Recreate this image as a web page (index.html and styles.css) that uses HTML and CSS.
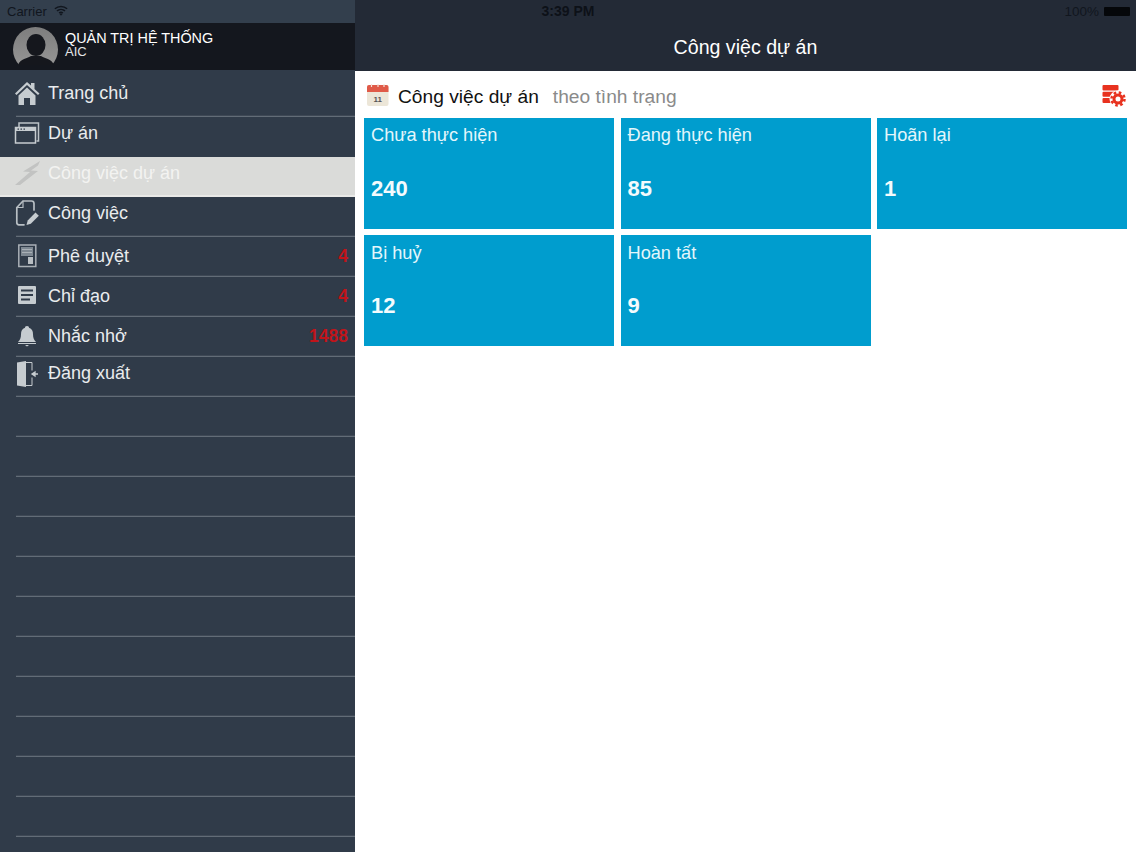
FILE: index.html
```html
<!DOCTYPE html>
<html lang="vi">
<head>
<meta charset="utf-8">
<title>Công việc dự án</title>
<link rel="stylesheet" href="styles.css">
</head>
<body>
<div class="app">
  <aside class="sidebar">
    <div class="status status-left"><span>Carrier</span>
      <svg class="wifi" width="14" height="11" viewBox="0 0 16 12"><path d="M1 4C5 .4 11 .4 15 4M3.400 6.500C6 4.300 10 4.300 12.600 6.500M5.800 8.800C7 7.800 9 7.800 10.200 8.800" fill="none" stroke="#11161e" stroke-width="1.700"/><path d="M8 12 6.300 10C7.300 9.400 8.700 9.400 9.700 10Z" fill="#11161e"/></svg>
    </div>
    <div class="user">
      <svg class="avatar" width="46" height="39" viewBox="0 0 46 39"><defs><clipPath id="av"><rect width="46" height="38"/></clipPath><linearGradient id="avg" x1="0" y1="0" x2="0" y2="1"><stop offset="0" stop-color="#7d7d7d"/><stop offset="1" stop-color="#9a9a9a"/></linearGradient></defs><g clip-path="url(#av)"><circle cx="22.500" cy="22.500" r="22.500" fill="url(#avg)"/><ellipse cx="23" cy="18" rx="9.500" ry="11" fill="#15171d"/><path d="M5 38c2-6 10-7 13-9h10c3 2 11 3 13 9v2H5Z" fill="#15171d"/></g></svg>
      <div class="user-text"><div class="user-name">QUẢN TRỊ HỆ THỐNG</div><div class="user-org">AIC</div></div>
    </div>
    <nav class="menu">
      <div class="row row-first"><svg class="ico" width="28" height="26" viewBox="0 0 28 26"><path d="M2 13.500 14 2l4 3.600V3h3.500v6L26.500 13.500 25 15 14 5 3.500 15Z" fill="#c6ccd0"/><path d="M5.500 15.500 14 7.500l8.500 8V25H17v-7h-6v7H5.500Z" fill="#c6ccd0"/></svg><span class="label">Trang chủ</span></div>
      <div class="row row-b2 row-noline"><svg class="ico" width="28" height="22" viewBox="0 0 28 22"><path d="M6 5V1h19.500v18H23.500" fill="none" stroke="#bcc3c8" stroke-width="1.500"/><rect x="2.500" y="5.500" width="20" height="15.500" fill="none" stroke="#c6ccd0" stroke-width="1.500"/><rect x="2.500" y="5.500" width="20" height="3.500" fill="#c6ccd0"/><path d="M4.500 7.200h1.500M7.500 7.200h1.500M10.500 7.200h1.500" stroke="#303b49" stroke-width="1.200"/></svg><span class="label">Dự án</span></div>
      <div class="row row-active"><svg class="ico" width="28" height="26" viewBox="0 0 28 26"><path d="M27 1 10 11.500l7 .5L2 25h5l18-14-7-.5 7-5Z" fill="#c2c3c2"/></svg><span class="label">Công việc dự án</span></div>
      <div class="row row-b2"><svg class="ico" width="28" height="28" viewBox="0 0 28 28"><path d="M10 2h8.500c1.500 0 2.500.8 2.500 2.500V11M10 2 3.800 8.500V23.500c0 1.500.8 2.300 2.200 2.300h5" fill="none" stroke="#b8bfc4" stroke-width="1.700" stroke-linecap="round"/><path d="M10 2v6.500H3.800" fill="none" stroke="#b8bfc4" stroke-width="1.200"/><path d="M13.500 26l1.200-4.500 7.800-8 3.300 3.300-8 7.900Z" fill="#c6ccd0"/></svg><span class="label">Công việc</span></div>
      <div class="row row-low"><svg class="ico" width="28" height="26" viewBox="0 0 28 26"><rect x="5.800" y="2" width="17" height="21.500" fill="#303b49" stroke="#a9b0b6" stroke-width="1.500"/><rect x="8" y="4" width="12" height="9" fill="#7d8791"/><path d="M9 6.500h10M9 9.500h10" stroke="#a9b0b6" stroke-width="1"/><rect x="15" y="14" width="5" height="7" fill="#b8bec3"/></svg><span class="label">Phê duyệt</span><span class="badge">4</span></div>
      <div class="row row-low"><svg class="ico" width="28" height="22" viewBox="0 0 28 22"><rect x="5" y="1" width="18" height="18" rx="1" fill="#c6ccd0"/><path d="M8 5.500h12M8 10h12M8 14.500h9" stroke="#303b49" stroke-width="2.200"/></svg><span class="label">Chỉ đạo</span><span class="badge">4</span></div>
      <div class="row row-low"><svg class="ico" width="28" height="22" viewBox="0 0 28 22"><path d="M14 1c1.500 0 2 .8 2 1.800 3 1 4 3.500 4 6.500 0 4 1 5.500 3 7.700H5c2-2.200 3-3.700 3-7.700 0-3 1-5.500 4-6.500C12 1.800 12.500 1 14 1Z" fill="#c6ccd0"/><path d="M5 18h18v1H5ZM12 20h4l-2 1.500Z" fill="#c6ccd0"/></svg><span class="label">Nhắc nhở</span><span class="badge">1488</span></div>
      <div class="row row-exit"><svg class="ico" width="28" height="28" viewBox="0 0 28 28"><path d="M4 2.500 13 1v26l-9-1.500Z" fill="#c6ccd0"/><path d="M13 2.500h6v8M13 25.500h6V17.500" fill="none" stroke="#c6ccd0" stroke-width="1"/><path d="M20 14h5M22 12 19 14l3 2Z" fill="#c6ccd0" stroke="#c6ccd0" stroke-width="1.300"/></svg><span class="label">Đăng xuất</span></div>
      <div class="row"></div><div class="row"></div><div class="row"></div><div class="row"></div>
      <div class="row"></div><div class="row"></div><div class="row"></div><div class="row"></div>
      <div class="row"></div><div class="row"></div><div class="row"></div>
    </nav>
  </aside>
  <main class="main">
    <header class="topbar">
      <div class="status status-right"><span class="time">3:39 PM</span><span class="battery-wrap"><span>100%</span><span class="battery"></span></span></div>
      <div class="title">Công việc dự án</div>
    </header>
    <section class="content">
      <div class="heading">
        <svg class="cal" width="22" height="23" viewBox="0 0 22 23"><rect x="0" y="1" width="21.500" height="21" rx="2" fill="#ece6d8"/><path d="M0 3a2 2 0 0 1 2-2h17.500a2 2 0 0 1 2 2v5H0Z" fill="#e05a48"/><path d="M4.500 0v3M11 0v3M17 0v3" stroke="#f2e2d8" stroke-width="1.200"/><text x="10.700" y="18" class="cal-num">11</text></svg>
        <span class="h-main">Công việc dự án</span><span class="h-sub">theo tình trạng</span>
        <svg class="gear" width="24" height="22" viewBox="0 0 24 22"><g fill="#e8321f"><rect x="0.500" y="0" width="16" height="5.500" rx="1"/><rect x="0.500" y="6.800" width="16" height="5" rx="1"/><rect x="0.500" y="13" width="16" height="5" rx="1"/></g><circle cx="16" cy="14" r="8.500" fill="#fff"/><circle cx="16" cy="14" r="4" fill="none" stroke="#e8321f" stroke-width="3"/><circle cx="16" cy="14" r="6.500" fill="none" stroke="#e8321f" stroke-width="2.500" stroke-dasharray="2.550 2.550"/></svg>
      </div>
      <div class="tiles">
        <div class="tile"><div class="tile-label">Chưa thực hiện</div><div class="tile-value">240</div></div>
        <div class="tile"><div class="tile-label">Đang thực hiện</div><div class="tile-value">85</div></div>
        <div class="tile"><div class="tile-label">Hoãn lại</div><div class="tile-value">1</div></div>
        <div class="tile tile-low"><div class="tile-label">Bị huỷ</div><div class="tile-value">12</div></div>
        <div class="tile tile-low"><div class="tile-label">Hoàn tất</div><div class="tile-value">9</div></div>
      </div>
    </section>
  </main>
</div>
</body>
</html>
```
FILE: styles.css
```css
* { box-sizing: border-box; }
html, body { margin: 0; height: 100%; }
body { font-family: "Liberation Sans", Arial, sans-serif; background: #fff; overflow: hidden; }
.app { display: flex; width: 1136px; height: 852px; overflow: hidden; }
.sidebar { width: 355px; flex: none; background: #303b49; color: #fff; display: flex; flex-direction: column; height: 852px; overflow: hidden; }
.status { font-size: 13px; color: #11161e; }
.status-left { height: 23px; padding: 4px 0 0 7px; display: flex; align-items: flex-start; gap: 7px; background: #333f4d; }
.wifi { margin-top: 1px; }
.user { height: 47px; background: #14171e; display: flex; align-items: flex-start; padding: 4px 0 0 13px; gap: 6px; flex: none; }
.avatar { flex: none; }
.user-text { padding-top: 5px; }
.user-name { font-size: 14.400px; line-height: 13px; color: #fff; }
.user-org { font-size: 13px; color: #e4e6e8; line-height: 12px; margin-top: 1px; }
.menu { display: flex; flex-direction: column; flex: none; }
.row { height: 40px; flex: none; position: relative; display: flex; align-items: center; padding: 0 7px 6px 13px; font-size: 18px; color: #e9ecee; }
.row::after { content: ""; position: absolute; left: 16px; right: 0; bottom: 0; height: 1px; background: #626c77; box-shadow: 0 -1px 0 #3e4855; }
.row-first { height: 47px; padding-bottom: 1px; }
.row-b2 { padding-bottom: 8px; }
.row-noline::after { display: none; }
.row-low { padding-bottom: 2px; }
.row-exit { padding-bottom: 7px; }
.row-active { background: #dadbd9; color: #f3f3f1; border-bottom: 2px solid #e9e9e7; padding-bottom: 6px; }
.row-active::after { display: none; }
.ico { flex: none; margin-right: 7px; }
.label { flex: 1; }
.badge { color: #c0141a; font-weight: 700; font-size: 17.500px; }
.main { flex: 1; display: flex; flex-direction: column; min-width: 0; }
.topbar { height: 71px; background: #232a36; flex: none; }
.status-right { height: 23px; padding: 3px 6px 0 0; position: relative; display: flex; justify-content: flex-end; }
.time { position: absolute; left: 0; width: 426px; text-align: center; top: 3px; font-size: 14px; font-weight: 700; color: #0d1118; }
.battery-wrap { display: flex; align-items: center; gap: 5px; height: 17px; font-size: 13.500px; }
.battery { width: 26px; height: 9px; background: #05070a; border-radius: 1px; }
.title { text-align: center; color: #fff; font-size: 19.600px; line-height: 48px; height: 48px; }
.content { flex: 1; padding: 0 9px; }
.heading { height: 47px; display: flex; align-items: center; padding-top: 5px; font-size: 19.200px; }
.cal { flex: none; margin: -4px 9px 0 3px; }
.cal-num { font-size: 8px; font-weight: 700; text-anchor: middle; fill: #555; font-family: "Liberation Sans", Arial, sans-serif; }
.h-main { color: #111; }
.h-sub { color: #8a8a8a; margin-left: 14px; flex: 1; }
.gear { flex: none; margin: -2px 1px 0 0; }
.tiles { display: grid; grid-template-columns: 250px 250px 250px; column-gap: 6.500px; row-gap: 6.500px; grid-auto-rows: 110.500px; }
.tile { background: #009dce; color: #fff; padding: 7px; }
.tile-low { padding-top: 8px; }
.tile-label { font-size: 18.200px; line-height: 20px; color: #e4f6fb; }
.tile-value { font-size: 22px; font-weight: 700; line-height: 26px; margin-top: 31px; color: #f4fbfd; }
.tile-low .tile-value { margin-top: 30px; }
```
